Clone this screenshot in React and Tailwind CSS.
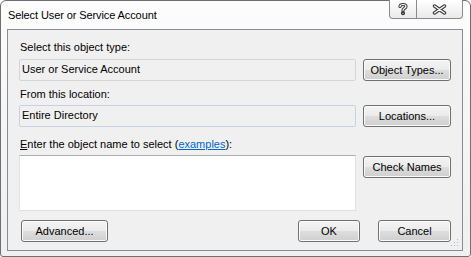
import React from 'react';

const btn =
  'flex items-center justify-center h-[22px] rounded-[3px] border border-[#707070] bg-[linear-gradient(to_bottom,#f4f4f4_0%,#ebebeb_48%,#dddddd_52%,#cfcfcf_100%)] shadow-[inset_0_0_0_1px_#fbfbfb] text-[11px] text-black';

const HelpGlyph = () => (
  <svg width="12" height="14" viewBox="0 0 12 14">
    <g fill="none" strokeLinecap="round" strokeLinejoin="round">
      <path d="M3 4.5C3 1.8 9 1.8 9 4.5C9 6.3 6 6.3 6 8.3" stroke="#3a3a3a" strokeWidth="3.2" />
      <circle cx="6" cy="11.2" r="1.1" stroke="#3a3a3a" strokeWidth="2" />
      <path d="M3 4.5C3 1.8 9 1.8 9 4.5C9 6.3 6 6.3 6 8.3" stroke="#ffffff" strokeWidth="1.2" />
      <circle cx="6" cy="11.2" r="0.5" fill="#ffffff" />
    </g>
  </svg>
);

const CloseGlyph = () => (
  <svg width="15" height="11" viewBox="0 0 15 11">
    <g fill="none" strokeLinecap="round">
      <path d="M2.5 2L12.5 9M12.5 2L2.5 9" stroke="#3a3a3a" strokeWidth="3.4" />
      <path d="M2.5 2L12.5 9M12.5 2L2.5 9" stroke="#ffffff" strokeWidth="1.3" />
    </g>
  </svg>
);

const Field = ({ text, border }) => (
  <div
    className={`flex items-center w-[337px] h-[22px] rounded-[2px] border ${border} bg-[#f0f0f0] pl-[2px] text-[11px] text-black`}
  >
    {text}
  </div>
);

const App = () => {
  return (
    <div className="w-[471px] h-[257px] bg-white font-['Liberation_Sans',Arial,sans-serif]">
      <div className="flex flex-col w-[471px] h-[257px] rounded-t-[6px] rounded-b-[3px] border border-[#6f6f6f] bg-[linear-gradient(to_bottom,#fdfdfd_0%,#f5f6f7_40%,#eef0f2_100%)]">
        {/* title bar */}
        <div className="flex h-[28px] pl-[7px] pr-[7px]">
          <div className="flex-1 pt-[8px] text-[11px] tracking-[-0.1px] text-black leading-[13px]">
            Select User or Service Account
          </div>
          <div className="flex h-[19px] mt-[-1px]">
            <div className="flex items-center justify-center w-[28px] h-[19px] border border-[#8a8a8a] border-t-0 rounded-bl-[4px] bg-[linear-gradient(to_bottom,#ffffff,#eaeaea)]">
              <HelpGlyph />
            </div>
            <div className="flex items-center justify-center w-[46px] h-[19px] border border-l-0 border-[#8a8a8a] border-t-0 rounded-br-[4px] bg-[linear-gradient(to_bottom,#ffffff,#eaeaea)]">
              <CloseGlyph />
            </div>
          </div>
        </div>

        {/* client panel */}
        <div className="relative flex flex-col ml-[6px] mr-[7px] w-[456px] h-[222px] border border-[#898c95] bg-[#f0f0f0] pl-[11px] pt-[11px] text-[11px] text-black">
          <div className="h-[13px] leading-[13px] pl-[1px]">Select this object type:</div>
          <div className="flex items-center gap-[7px] mt-[4px]">
            <Field text="User or Service Account" border="border-[#d5d5d5]" />
            <div className={`${btn} w-[88px] mt-[1px]`}>Object Types...</div>
          </div>

          <div className="h-[13px] leading-[13px] pl-[1px] mt-[7px]">From this location:</div>
          <div className="flex items-center gap-[7px] mt-[3px]">
            <Field text="Entire Directory" border="border-[#c3d3e4]" />
            <div className={`${btn} w-[88px] mt-[1px]`}>Locations...</div>
          </div>

          <div className="h-[13px] leading-[13px] pl-[1px] mt-[11px]">
            <span className="underline">E</span>nter the object name to select (
            <span className="text-[#0066cc] underline">examples</span>):
          </div>
          <div className="flex items-start gap-[7px] mt-[4px]">
            <div className="w-[337px] h-[56px] bg-white border border-[#dbdfe6] border-t-[#abadb3] border-l-[#e2e3ea]" />
            <div className={`${btn} w-[88px] mt-[1px]`}>Check Names</div>
          </div>

          <div className="flex items-center mt-[9px] pl-[2px]">
            <div className={`${btn} w-[87px]`}>Advanced...</div>
            <div className="flex-1" />
            <div className={`${btn} w-[62px]`}>OK</div>
            <div className={`${btn} w-[73px] ml-[18px] mr-[11px]`}>Cancel</div>
          </div>

          {/* size grip */}
          <svg className="absolute right-[2px] bottom-[2px]" width="10" height="10" viewBox="0 0 10 10">
            <g fill="#b8b8b8">
              <rect x="7" y="1" width="1" height="1" />
              <rect x="4" y="4" width="1" height="1" />
              <rect x="7" y="4" width="1" height="1" />
              <rect x="1" y="7" width="1" height="1" />
              <rect x="4" y="7" width="1" height="1" />
              <rect x="7" y="7" width="1" height="1" />
            </g>
          </svg>
        </div>
      </div>
    </div>
  );
};

export default App;
